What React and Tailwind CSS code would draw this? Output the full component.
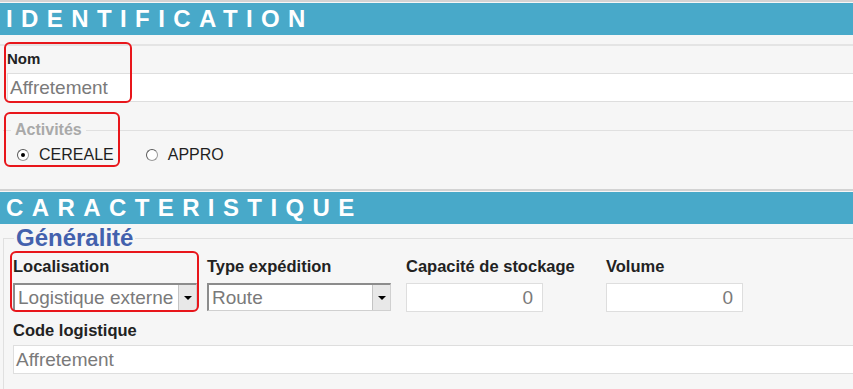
import React from "react";

function SectionHeader({ title }) {
  return (
    <div>
      <div className="h-[2px] bg-[#d3d3d3]" />
      <div className="mt-px flex h-8 items-center bg-[#48a9c9] pl-[6px]">
        <span className="text-[24px] font-bold leading-none tracking-[8.4px] text-white">{title}</span>
      </div>
    </div>
  );
}

function TextInput({ value, className = "", align = "left" }) {
  return (
    <div
      className={`flex h-[29px] items-center border border-[#dedede] bg-white pl-[2px] text-[19px] leading-none text-[#7a7a7a] ${
        align === "right" ? "justify-end pr-[9px]" : ""
      } ${className}`}
    >
      {value}
    </div>
  );
}

function Select({ value }) {
  return (
    <div className="flex h-[28px] w-[184px] border border-t-2 border-l-2 border-[#8c8c8c] border-r-[#d0d0d0] border-b-[#d0d0d0] bg-white">
      <span className="flex-1 overflow-hidden whitespace-nowrap pl-[3px] text-[19px] leading-[25px] text-[#7a7a7a]">
        {value}
      </span>
      <span className="flex w-[18px] items-center justify-center border-l border-[#c4c4c4] bg-[#e8e8e8]">
        <span className="h-0 w-0 border-x-[4px] border-t-[4px] border-x-transparent border-t-black" />
      </span>
    </div>
  );
}

function Radio({ checked, label }) {
  return (
    <label className="flex items-center gap-[10px] text-[16px] leading-[18px] text-[#1f1f1f]">
      <span className="flex h-[12px] w-[12px] items-center justify-center rounded-full border border-[#9a9a9a] border-t-[#5a5a5a] border-l-[#5a5a5a] bg-white">
        {checked && <span className="h-[4px] w-[4px] rounded-full bg-black" />}
      </span>
      {label}
    </label>
  );
}

function Field({ label, width, children }) {
  return (
    <div className={`flex flex-col ${width}`}>
      <span className="mb-[8px] text-[16.5px] font-bold leading-[18px] text-[#222]">{label}</span>
      {children}
    </div>
  );
}

export default function App() {
  return (
    <div className="w-full overflow-hidden bg-[#f6f6f6]" style={{ fontFamily: '"Liberation Sans", Arial, sans-serif' }}>
      <div className="relative h-[389px] w-[875px]">
        <SectionHeader title="IDENTIFICATION" />

        <div className="mt-[9px] border-t-2 border-[#e4e4e4] pt-[4px] pl-[7px]">
          <span className="mb-[5px] block text-[15px] font-bold leading-[18px] text-[#222]">Nom</span>
          <TextInput value="Affretement" />
        </div>

        <fieldset className="mt-[19px] ml-[3px] h-[68px] border-t border-[#e0e0e0]">
          <legend className="ml-[8px] px-[4px] text-[16px] font-bold leading-[18px] text-[#a9a9a9]">Activités</legend>
          <div className="mt-[7px] flex gap-[32px] pl-[14px]">
            <Radio checked label="CEREALE" />
            <Radio label="APPRO" />
          </div>
        </fieldset>

        <SectionHeader title="CARACTERISTIQUE" />

        <fieldset className="ml-[3px] border-t border-l border-[#e0e0e0] pl-[9px] pb-[20px]">
          <legend className="ml-[1px] px-[2px] text-[24px] font-bold leading-[28px] text-[#4361ad]">Généralité</legend>
          <div className="mt-[5px] flex">
            <Field label="Localisation" width="w-[194px]">
              <Select value="Logistique externe" />
            </Field>
            <Field label="Type expédition" width="w-[199px]">
              <Select value="Route" />
            </Field>
            <Field label="Capacité de stockage" width="w-[200px]">
              <TextInput value="0" align="right" className="h-[28px] w-[137px]" />
            </Field>
            <Field label="Volume" width="w-[200px]">
              <TextInput value="0" align="right" className="h-[28px] w-[137px]" />
            </Field>
          </div>
          <div className="mt-[9px] flex flex-col">
            <span className="mb-[6px] text-[16.5px] font-bold leading-[18px] text-[#222]">Code logistique</span>
            <TextInput value="Affretement" className="h-[28px]" />
          </div>
        </fieldset>

        <div className="pointer-events-none absolute left-[4px] top-[42px] h-[61px] w-[128px] rounded-[6px] border-2 border-[#e8161b]" />
        <div className="pointer-events-none absolute left-[4px] top-[112px] h-[55px] w-[116px] rounded-[6px] border-2 border-[#e8161b]" />
        <div className="pointer-events-none absolute left-[10px] top-[251px] h-[61px] w-[189px] rounded-[6px] border-2 border-[#e8161b]" />
      </div>
    </div>
  );
}
